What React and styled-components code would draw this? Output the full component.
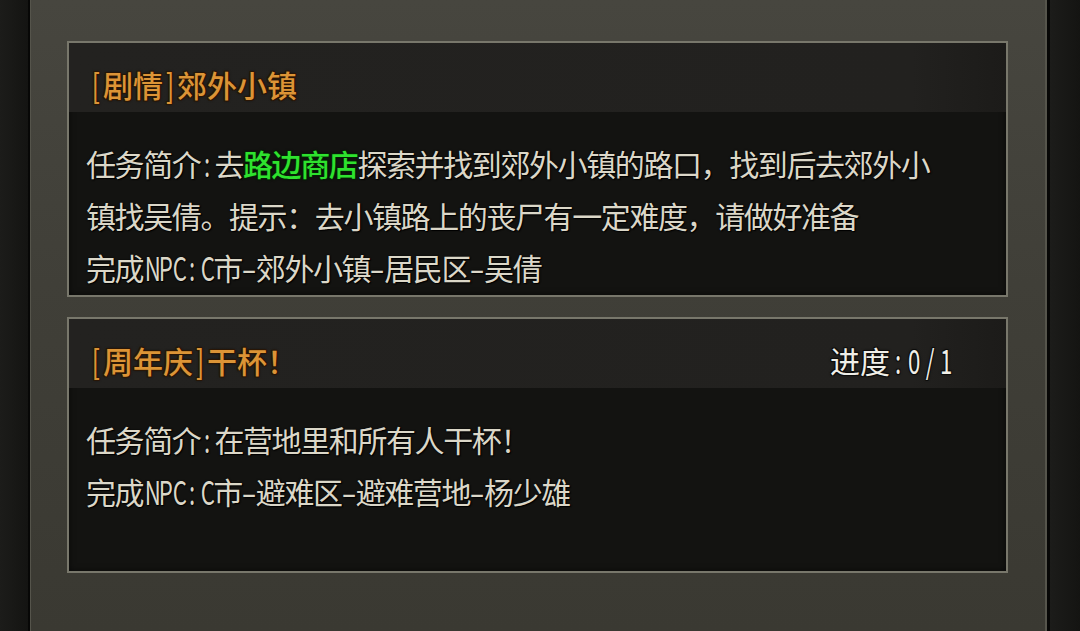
import React from "react";
import styled, { createGlobalStyle, css } from "styled-components";

const Global = createGlobalStyle`
  html, body { margin: 0; padding: 0; background: #161614; overflow: hidden; }
  #root { width: 1080px; height: 631px; }
`;

const Screen = styled.div`
  display: flex;
  width: 1080px;
  height: 631px;
  font-family: "Noto Sans CJK SC", "Noto Sans", sans-serif;
`;

const Strip = styled.div`
  flex: none;
  background: linear-gradient(90deg, #1c1c1a, #141412);
  ${(p) =>
    p.$side === "left"
      ? css`
          width: 28px;
          border-right: 2px solid #070706;
        `
      : css`
          width: 30px;
          border-left: 3px solid #070706;
        `}
`;

const Panel = styled.div`
  flex: 1;
  display: flex;
  flex-direction: column;
  gap: 20px;
  padding: 41px 37px 0 36px;
  background: linear-gradient(180deg, #47463f 0%, #403f38 45%, #3a3932 100%);
  border-left: 1px solid #55544b;
  border-right: 2px solid #56554c;
`;

const Card = styled.section`
  border: 2px solid #78776b;
  background: #131311;
  box-shadow: inset 0 0 6px rgba(0, 0, 0, 0.6);
`;

const Header = styled.header`
  height: 69px;
  box-sizing: border-box;
  padding: 12px 52px 0 20px;
  display: flex;
  align-items: center;
  justify-content: space-between;
  background: linear-gradient(90deg, #232220 0%, #22211f 90%, #1c1b19 100%);
`;

const outline = (c) =>
  `-1px -1px 0 ${c}, 1px -1px 0 ${c}, -1px 1px 0 ${c}, 1px 1px 0 ${c}, 0 0 3px #000`;

const Title = styled.h2`
  margin: 0;
  font-size: 30px;
  line-height: 30px;
  font-weight: 500;
  color: #dc9436;
  text-shadow: ${outline("#2a1605")};
`;

const Progress = styled.span`
  font-size: 30px;
  line-height: 30px;
  font-weight: 400;
  color: #f0efe8;
  text-shadow: ${outline("#0c0c0b")};
`;

const Body = styled.div`
  min-height: 183px;
  box-sizing: border-box;
  padding: 25px 60px 0 17px;
  font-size: 30px;
  line-height: 52px;
  letter-spacing: -1.4px;
  color: #dbd7c8;
  text-shadow: 0 0 2px #000, 1px 1px 1px #000;
`;

const Line = styled.p`
  margin: 0;
  height: 52px;
`;

const Wrapped = styled.p`
  margin: 0;
`;

const Highlight = styled.span`
  color: #2ee22e;
  font-weight: 500;
  text-shadow: ${outline("#062006")};
`;

const Half = styled.span`
  display: inline-block;
  width: ${(p) => p.$w}px;
  line-height: 1;
  text-align: center;
  letter-spacing: 0;
  transform: scale(${(p) => (p.$dash ? 1.5 : 0.74)}, 1.1);
`;

function Glyphs({ text, w = 14 }) {
  const parts = [];
  let run = "";
  [...text].forEach((c, i) => {
    if (c.charCodeAt(0) < 0x2e80) {
      if (run) {
        parts.push(run);
        run = "";
      }
      parts.push(
        <Half key={i} $w={w} $dash={c === "-"}>
          {c}
        </Half>
      );
    } else {
      run += c;
    }
  });
  if (run) parts.push(run);
  return <>{parts}</>;
}

const quests = [
  {
    title: "[剧情]郊外小镇",
    lines: [
      [
        "任务简介:去",
        { hl: "路边商店" },
        "探索并找到郊外小镇的路口，找到后去郊外小镇找吴倩。提示：去小镇路上的丧尸有一定难度，请做好准备",
      ],
      ["完成NPC:C市-郊外小镇-居民区-吴倩"],
    ],
  },
  {
    title: "[周年庆]干杯！",
    progress: "进度:0/1",
    lines: [["任务简介:在营地里和所有人干杯！"], ["完成NPC:C市-避难区-避难营地-杨少雄"]],
  },
];

export default function App() {
  return (
    <>
      <Global />
      <Screen>
        <Strip $side="left" />
        <Panel>
          {quests.map((q, qi) => (
            <Card key={qi}>
              <Header>
                <Title>
                  <Glyphs text={q.title} w={14} />
                </Title>
                {q.progress && (
                  <Progress>
                    <Glyphs text={q.progress} w={16} />
                  </Progress>
                )}
              </Header>
              <Body>
                {q.lines.map((segs, li) => {
                  const content = segs.map((s, si) =>
                    typeof s === "string" ? (
                      <Glyphs key={si} text={s} />
                    ) : (
                      <Highlight key={si}>{s.hl}</Highlight>
                    )
                  );
                  return segs.length > 1 ? (
                    <Wrapped key={li}>{content}</Wrapped>
                  ) : (
                    <Line key={li}>{content}</Line>
                  );
                })}
              </Body>
            </Card>
          ))}
        </Panel>
        <Strip $side="right" />
      </Screen>
    </>
  );
}
